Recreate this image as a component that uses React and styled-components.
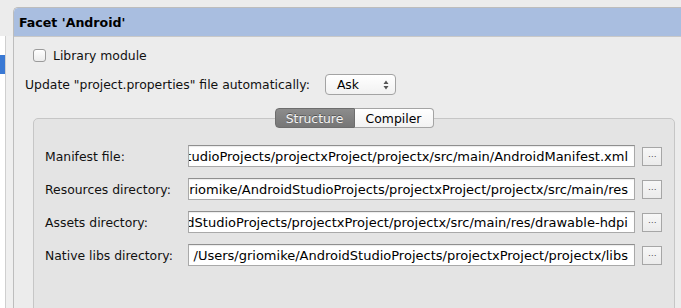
import React from 'react';
import styled, { createGlobalStyle } from 'styled-components';

const GlobalStyle = createGlobalStyle`
  html, body {
    margin: 0;
    padding: 0;
    background: #ececec;
  }
  body {
    font-family: 'DejaVu Sans', 'Liberation Sans', sans-serif;
    font-size: 12.4px;
    color: #111;
  }
`;

const Window = styled.div`
  display: flex;
  width: 681px;
  height: 308px;
  overflow: hidden;
  background: #ececec;
`;

// left list of facets, mostly hidden behind the panel
const Sidebar = styled.div`
  display: flex;
  width: 13px;
  flex-shrink: 0;
  padding-top: 36px;
  box-sizing: border-box;
`;

const List = styled.div`
  width: 5px;
  background: #fff;
  border-right: 1px solid #cfcfcf;
  padding-top: 19px;
`;

const Selected = styled.div`
  height: 19px;
  background: #3a79d4;
`;

const Gutter = styled.div`
  flex: 1;
  background: #efefef;
`;

const Panel = styled.section`
  flex: 1;
  min-height: 0;
  margin-top: 7px;
  border: 1px solid #bdbdbd;
  border-right: none;
  border-bottom: none;
  border-top-left-radius: 5px;
  background: #ececec;
  display: flex;
  flex-direction: column;
  overflow: hidden;
`;

const Header = styled.header`
  flex-shrink: 0;
  height: 28px;
  display: flex;
  align-items: center;
  padding-left: 5px;
  background: #a9bee0;
  border-bottom: 1px solid #c8c8c8;
  border-top-left-radius: 4px;
  font-weight: bold;
  font-size: 12.6px;
  color: #000;
`;

const Content = styled.div`
  flex-shrink: 0;
  display: flex;
  flex-direction: column;
  padding: 0 6px 0 11px;

  & > * {
    flex-shrink: 0;
  }
`;

const CheckRow = styled.label`
  display: flex;
  align-items: center;
  gap: 7px;
  height: 13px;
  margin-top: 12px;
  padding-left: 8px;
`;

const Checkbox = styled.span`
  width: 13px;
  height: 13px;
  box-sizing: border-box;
  border: 1px solid #9b9b9b;
  border-radius: 3px;
  background: linear-gradient(#ffffff, #ececec);
  box-shadow: inset 0 1px 0 #fff;
`;

const UpdateRow = styled.div`
  display: flex;
  align-items: center;
  gap: 15px;
  height: 21px;
  margin-top: 12px;
`;

const Select = styled.div`
  width: 71px;
  height: 21px;
  box-sizing: border-box;
  display: flex;
  align-items: center;
  justify-content: space-between;
  padding: 0 6px 0 11px;
  border: 1px solid #a3a3a3;
  border-radius: 4px;
  background: linear-gradient(#ffffff, #f1f1f1);
  color: #000;
`;

const Arrows = styled.svg`
  width: 6px;
  height: 10px;
`;

const Tabs = styled.div`
  display: flex;
  justify-content: center;
  margin-top: 13px;
  padding-left: 8px;
  position: relative;
  z-index: 1;
`;

const Tab = styled.div`
  width: ${p => p.$w}px;
  height: 20px;
  box-sizing: border-box;
  display: flex;
  align-items: center;
  justify-content: center;
  border: 1px solid ${p => (p.$active ? '#6d6d6d' : '#a4a4a4')};
  border-radius: ${p => (p.$first ? '4px 0 0 4px' : '0 4px 4px 0')};
  border-left: ${p => (p.$first ? undefined : 'none')};
  background: ${p =>
    p.$active ? 'linear-gradient(#8c8c8c, #767676)' : 'linear-gradient(#ffffff, #f2f2f2)'};
  color: ${p => (p.$active ? '#f4f4f4' : '#000')};
  text-shadow: ${p => (p.$active ? '0 -1px 0 #555' : 'none')};
`;

const Group = styled.div`
  margin: -10px 0 0 8px;
  height: 220px;
  box-sizing: border-box;
  padding: 26px 12px 0 11px;
  border: 1px solid #c6c6c6;
  border-radius: 5px;
  background: #e4e4e4;
  display: flex;
  flex-direction: column;
  gap: 11px;
`;

const Row = styled.div`
  display: grid;
  grid-template-columns: 136px 447px 20px;
  column-gap: 7px;
  align-items: center;
  height: 22px;
`;

const Field = styled.div`
  height: 22px;
  box-sizing: border-box;
  display: flex;
  justify-content: flex-end;
  align-items: center;
  overflow: hidden;
  padding-right: 6px;
  border: 1px solid #a9a9a9;
  border-top-color: #8f8f8f;
  background: #fff;
  box-shadow: inset 0 1px 1px rgba(0, 0, 0, 0.08);
  white-space: nowrap;
  font-size: 13px;
  color: #000;

  span {
    flex-shrink: 0;
  }
`;

const Browse = styled.div`
  width: 20px;
  height: 19px;
  box-sizing: border-box;
  display: flex;
  align-items: center;
  justify-content: center;
  border: 1px solid #a6a6a6;
  background: linear-gradient(#f7f7f7, #ebebeb);
  font-size: 8px;
  color: #444;
`;

const paths = [
  ['Manifest file:', '/Users/griomike/AndroidStudioProjects/projectxProject/projectx/src/main/AndroidManifest.xml'],
  ['Resources directory:', '/Users/griomike/AndroidStudioProjects/projectxProject/projectx/src/main/res'],
  ['Assets directory:', '/Users/griomike/AndroidStudioProjects/projectxProject/projectx/src/main/res/drawable-hdpi'],
  ['Native libs directory:', '/Users/griomike/AndroidStudioProjects/projectxProject/projectx/libs'],
];

const App = () => {
  return (
    <Window>
      <GlobalStyle />
      <Sidebar>
        <List>
          <Selected />
        </List>
        <Gutter />
      </Sidebar>
      <Panel>
        <Header>Facet 'Android'</Header>
        <Content>
          <CheckRow>
            <Checkbox />
            Library module
          </CheckRow>
          <UpdateRow>
            <span>Update "project.properties" file automatically:</span>
            <Select>
              Ask
              <Arrows viewBox="0 0 6 10">
                <path d="M3 0.5 L5.5 4 H0.5 Z M3 9.5 L5.5 6 H0.5 Z" fill="#555" />
              </Arrows>
            </Select>
          </UpdateRow>
          <Tabs>
            <Tab $w={80} $first $active>Structure</Tab>
            <Tab $w={79}>Compiler</Tab>
          </Tabs>
          <Group>
            {paths.map(([label, value]) => (
              <Row key={label}>
                <span>{label}</span>
                <Field>
                  <span>{value}</span>
                </Field>
                <Browse>⋯</Browse>
              </Row>
            ))}
          </Group>
        </Content>
      </Panel>
    </Window>
  );
};

export default App;
